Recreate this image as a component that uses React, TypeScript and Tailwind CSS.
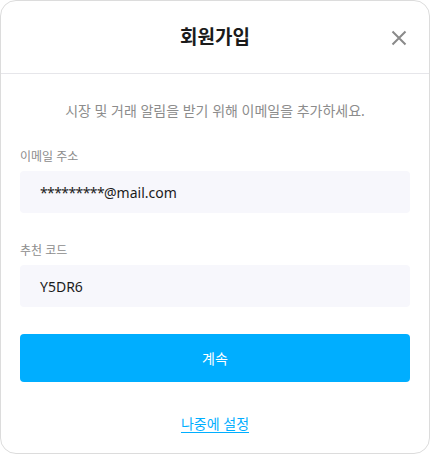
export default function App() {
  return (
    <div
      className="w-[430px] h-[454px] bg-white"
      style={{ fontFamily: '"Noto Sans", "Noto Sans CJK KR", sans-serif' }}
    >
      <div className="h-full border border-[#dcdcdc] rounded-[16px] flex flex-col overflow-hidden">
        {/* Header */}
        <div className="relative h-[73px] flex-shrink-0 border-b border-[#e6e6ea] flex items-center justify-center">
          <span className="text-[19px] font-bold text-[#1b1b1b] leading-none">회원가입</span>
          <button className="absolute left-[390px] top-[29px] text-[#8a8a8a]">
            <svg width="16" height="16" viewBox="0 0 16 16" fill="none" stroke="currentColor" strokeWidth="2">
              <path d="M1.5 1.5 14.5 14.5M14.5 1.5 1.5 14.5" />
            </svg>
          </button>
        </div>

        {/* Body */}
        <div className="flex flex-col px-[19px]">
          <p className="mt-[27px] text-center text-[14px] leading-[20px] text-[#8c8c8c]">
            시장 및 거래 알림을 받기 위해 이메일을 추가하세요.
          </p>

          <label className="mt-[28px] text-[12px] leading-[16px] text-[#8c8c8c]">이메일 주소</label>
          <div className="mt-[6px] h-[42px] rounded-[4px] bg-[#f7f7fc] flex items-center px-[20px] text-[14px] text-[#1b1b1b]">
            <span className="tracking-[-0.6px]">*********</span>@mail.com
          </div>

          <label className="mt-[30px] text-[12px] leading-[16px] text-[#8c8c8c]">추천 코드</label>
          <div className="mt-[6px] h-[42px] rounded-[4px] bg-[#f7f7fc] flex items-center px-[20px] text-[14px] text-[#1b1b1b]">
            Y5DR6
          </div>

          <button className="mt-[27px] h-[48px] rounded-[4px] bg-[#00aeff] text-white text-[14px]">
            계속
          </button>

          <div className="mt-[29px] text-center">
            <a className="text-[14px] leading-[20px] text-[#00aeff] underline underline-offset-[3px]">나중에 설정</a>
          </div>
        </div>
      </div>
    </div>
  );
}
